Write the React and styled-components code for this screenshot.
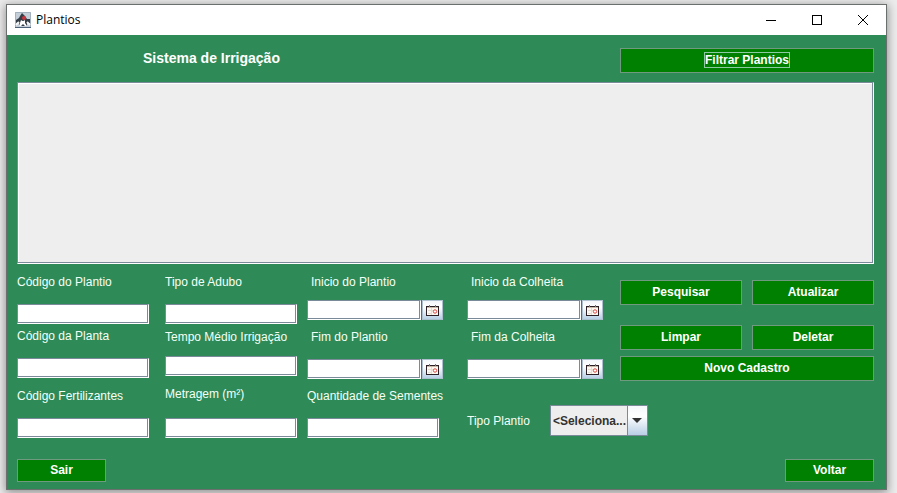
import React from "react";
import styled, { createGlobalStyle } from "styled-components";

const GlobalStyle = createGlobalStyle`
  *, *::before, *::after { box-sizing: border-box; }
  body {
    margin: 0;
    background: #ececec;
    font-family: "Liberation Sans", Arial, sans-serif;
    font-size: 12px;
    line-height: 16px;
  }
  button, input, select { font: inherit; margin: 0; border-radius: 0; }
`;

const Desktop = styled.div`
  padding: 4px 10px 3px 6px;
  overflow: hidden;
`;

const Frame = styled.main`
  border: 1px solid #6b6f6d;
  background: #2e8b57;
  box-shadow: 0 2px 9px 1px rgba(0, 0, 0, 0.38);
`;

const TitleBar = styled.header`
  display: flex;
  align-items: center;
  height: 30px;
  padding-left: 8px;
  background: #fff;
  color: #000;
  font-family: "Open Sans", "Noto Sans", sans-serif;
  svg { display: block; }
`;

const WindowTitle = styled.span`
  flex: 1;
  padding-left: 5px;
`;

const WindowButton = styled.button`
  display: grid;
  place-items: center;
  width: 46px;
  height: 30px;
  padding: 0;
  border: 0;
  background: transparent;
  color: #000;
`;

const Content = styled.div`
  padding: 13px 12px 7px 10px;
`;

const Heading = styled.div`
  display: grid;
  grid-template-columns: minmax(0, 603fr) minmax(0, 254fr);
  margin-bottom: 9px;
`;

const Title = styled.h1`
  margin: 0;
  padding: 2px 0 0 126px;
  color: #fff;
  font-size: 14px;
  line-height: 16px;
  font-weight: bold;
`;

const GreenButton = styled.button`
  height: ${(p) => (p.$compact ? "23px" : "25px")};
  width: ${(p) => (p.$compact ? "89px" : "auto")};
  padding: 0 0 1px;
  border: 1px solid #6f9a80;
  background: #008000;
  color: #fff;
  font-weight: bold;
  line-height: 14px;
  ${(p) => p.$wide && "grid-column: 1 / -1;"}
`;

const FocusRing = styled.span`
  display: inline-block;
  border: 1px solid #8fc9a4;
`;

const etched = `
  border: 1px solid;
  border-color: #7a8a99 #fff #fff #7a8a99;
  box-shadow: inset -1px -1px 0 #7a8a99, inset 1px 1px 0 #fff;
`;

const ResultsPane = styled.section`
  height: 182px;
  background: #eee;
  ${etched}
`;

const Form = styled.form`
  display: grid;
  grid-template-columns: minmax(0, 148fr) minmax(0, 142fr) minmax(0, 160fr) minmax(0, 407fr);
  margin-top: 10px;
`;

const Column = styled.div`
  display: flex;
  flex-direction: column;
  padding-right: ${(p) => p.$gutter}px;
`;

const FieldBox = styled.div`
  display: flex;
  flex-direction: column;
  gap: ${(p) => p.$gap}px;
  margin-top: ${(p) => p.$top}px;
`;

const Label = styled.label`
  padding-left: ${(p) => (p.$indent ? "4px" : "0")};
  color: #f4fff8;
  white-space: nowrap;
`;

const TextInput = styled.input`
  flex: 1;
  width: 100%;
  min-width: 0;
  height: 20px;
  min-height: 20px;
  padding: 0 3px;
  outline: 0;
  background: #fff;
  ${etched}
`;

const FullInput = styled(TextInput)`
  flex: none;
  margin-right: ${(p) => p.$inset || 0}px;
  width: auto;
`;

const DateRow = styled.div`
  display: flex;
  gap: 1px;
`;

const metal = "linear-gradient(#f4f7fb, #ffffff 35%, #b8cfe5)";

const CalendarButton = styled.button`
  display: grid;
  place-items: center;
  flex: none;
  width: 21px;
  height: 20px;
  padding: 0;
  border: 1px solid #aebfd0;
  background: ${metal};
`;

const RightSide = styled.div`
  display: flex;
  flex-direction: column;
`;

const RightTop = styled.div`
  display: grid;
  grid-template-columns: minmax(0, 153fr) minmax(0, 254fr);
`;

const Actions = styled.div`
  display: grid;
  grid-template-columns: 1fr 1fr;
  column-gap: 10px;
  align-content: start;
  padding-top: 6px;
`;

const ActionGap = styled.div`
  grid-column: 1 / -1;
  height: ${(p) => p.$size}px;
`;

const TypeRow = styled.div`
  display: flex;
  align-items: center;
  gap: 20px;
  margin-top: 24px;
`;

const SelectBox = styled.div`
  display: grid;
  grid-template-columns: 77px 21px;
  height: 31px;
  color: #333;
`;

const Select = styled.select`
  grid-area: 1 / 1 / 2 / 3;
  appearance: none;
  padding: 0 0 0 2px;
  border: 1px solid #7a8a99;
  outline: 0;
  background: #eee;
  color: #333;
  font-weight: bold;
`;

const Arrow = styled.span`
  grid-area: 1 / 2;
  display: grid;
  place-items: center;
  border: 1px solid #7a8a99;
  background: ${metal};
  pointer-events: none;
`;

const Footer = styled.footer`
  display: flex;
  justify-content: space-between;
  margin-top: 21px;
`;

function DukeIcon() {
  return (
    <svg width="16" height="16" viewBox="0 0 16 16" aria-hidden="true">
      <rect width="16" height="16" fill="#c3ced9" />
      <path d="M.5 15V.5H15.5V15" fill="none" stroke="#a3b0bd" />
      <path d="M0 15.5H16" stroke="#4d6178" />
      <path d="M7 1 10 4 12 7 15 7 15 11 12 11 12 14H4V10L1 11V8L4 6 5 4Z" fill="#343c45" />
      <path d="M6 8Q8 10 10 8L10 11 12 14H10L8 12 6 14H4L5 11Z" fill="#fff" />
      <path d="M1 13 4 10M12 10 15 13" stroke="#f4f5f6" strokeWidth="2" />
      <ellipse cx="9" cy="6" rx="2" ry="2" fill="#c8343e" />
    </svg>
  );
}

function CalendarIcon() {
  return (
    <svg width="13" height="11" viewBox="0 0 13 11" aria-hidden="true">
      <rect x=".5" y="1.5" width="12" height="9" fill="#fdf7f1" stroke="#2c2026" />
      <path d="M.5 1V11M12.5 1V11" stroke="#2c2026" />
      <path d="M1 2.5H12" stroke="#c8bba9" />
      <path d="M3.5 0V2M9.5 0V2" stroke="#81766c" />
      <path d="M2 5.5H7M2 8.5H6M5.5 3V10" stroke="#e4ddd2" />
      <circle cx="9" cy="6.5" r="1.7" fill="#fff" stroke="#df4540" />
    </svg>
  );
}

function Field({ id, label, top = 0, gap = 14, inset }) {
  return (
    <FieldBox $top={top} $gap={gap}>
      <Label htmlFor={id}>{label}</Label>
      <FullInput id={id} type="text" $inset={inset} />
    </FieldBox>
  );
}

function DateField({ id, label, top = 0, gap = 14 }) {
  return (
    <FieldBox $top={top} $gap={gap}>
      <Label htmlFor={id} $indent>{label}</Label>
      <DateRow>
        <TextInput id={id} type="text" />
        <CalendarButton type="button" aria-label={`Calendário: ${label}`}>
          <CalendarIcon />
        </CalendarButton>
      </DateRow>
    </FieldBox>
  );
}

export default function App() {
  return (
    <Desktop>
      <GlobalStyle />
      <Frame>
        <TitleBar>
          <DukeIcon />
          <WindowTitle>Plantios</WindowTitle>
          <WindowButton aria-label="Minimizar">
            <svg width="10" height="11"><path d="M0 5.5H10" stroke="currentColor" /></svg>
          </WindowButton>
          <WindowButton aria-label="Maximizar">
            <svg width="10" height="10"><rect x=".5" y=".5" width="9" height="9" fill="none" stroke="currentColor" /></svg>
          </WindowButton>
          <WindowButton aria-label="Fechar">
            <svg width="10" height="10"><path d="M0 0 10 10M10 0 0 10" stroke="currentColor" /></svg>
          </WindowButton>
        </TitleBar>
        <Content>
          <Heading>
            <Title>Sistema de Irrigação</Title>
            <GreenButton type="button"><FocusRing>Filtrar Plantios</FocusRing></GreenButton>
          </Heading>
          <ResultsPane aria-label="Resultados" />
          <Form onSubmit={(e) => e.preventDefault()}>
            <Column $gutter={16}>
              <Field id="codigo-plantio" label="Código do Plantio" />
              <Field id="codigo-planta" label="Código da Planta" top={4} />
              <Field id="codigo-fertilizantes" label="Código Fertilizantes" top={10} />
            </Column>
            <Column $gutter={10}>
              <Field id="tipo-adubo" label="Tipo de Adubo" />
              <Field id="tempo-irrigacao" label="Tempo Médio Irrigação" top={5} gap={11} />
              <Field id="metragem" label="Metragem (m²)" top={10} gap={16} />
            </Column>
            <Column $gutter={24}>
              <DateField id="inicio-plantio" label="Inicio do Plantio" gap={10} />
              <DateField id="fim-plantio" label="Fim do Plantio" top={9} />
              <Field id="quantidade" label="Quantidade de Sementes" top={9} inset={4} />
            </Column>
            <RightSide>
              <RightTop>
                <Column $gutter={17}>
                  <DateField id="inicio-colheita" label="Inicio da Colheita" gap={10} />
                  <DateField id="fim-colheita" label="Fim da Colheita" top={9} />
                </Column>
                <Actions>
                  <GreenButton type="button">Pesquisar</GreenButton>
                  <GreenButton type="button">Atualizar</GreenButton>
                  <ActionGap $size={20} />
                  <GreenButton type="button">Limpar</GreenButton>
                  <GreenButton type="button">Deletar</GreenButton>
                  <ActionGap $size={6} />
                  <GreenButton type="button" $wide>Novo Cadastro</GreenButton>
                </Actions>
              </RightTop>
              <TypeRow>
                <Label htmlFor="tipo-plantio">Tipo Plantio</Label>
                <SelectBox>
                  <Select id="tipo-plantio">
                    <option>{"<Seleciona..."}</option>
                  </Select>
                  <Arrow>
                    <svg width="10" height="5" aria-hidden="true"><path d="M0 0H10L5 5Z" fill="#333" /></svg>
                  </Arrow>
                </SelectBox>
              </TypeRow>
            </RightSide>
          </Form>
          <Footer>
            <GreenButton type="button" $compact>Sair</GreenButton>
            <GreenButton type="button" $compact>Voltar</GreenButton>
          </Footer>
        </Content>
      </Frame>
    </Desktop>
  );
}
